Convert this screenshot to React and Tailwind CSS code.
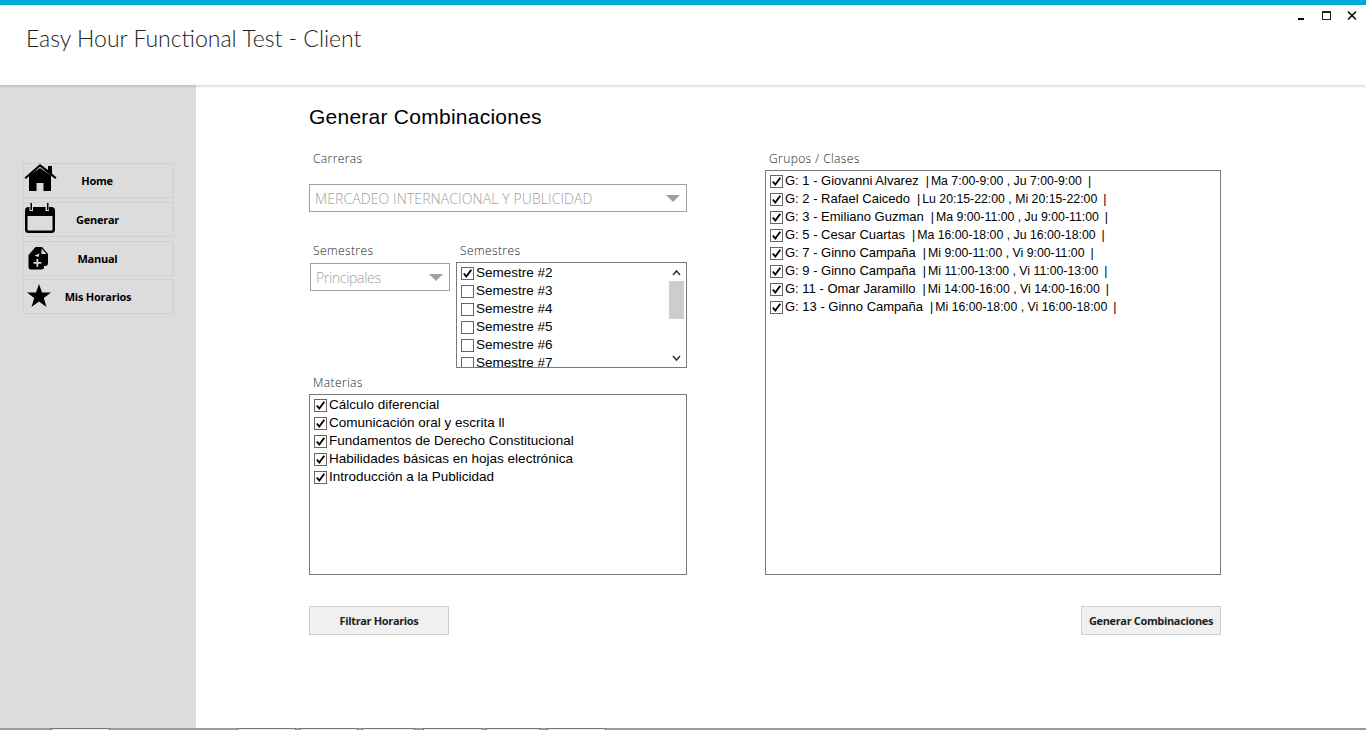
import React from "react";

const seg = { fontFamily: '"Open Sans", "Noto Sans", sans-serif' };
const bold = { fontFamily: '"Open Sans", sans-serif' };
const sans = { fontFamily: '"Liberation Sans", sans-serif' };

function HomeIcon() {
  return (
    <svg width="33" height="29" viewBox="0 0 33 29" fill="black">
      <path d="M16 1L24 7V3h4v7.500l4.500 4-1.300 1.500L16 3.800 1.800 16 .5 14.500z" />
      <path d="M5 12.500L16 5l11 7.500V28h-7.500v-8H12.500v8H5z" />
    </svg>
  );
}

function CalendarIcon() {
  return (
    <svg width="32" height="32" viewBox="0 0 32 32" fill="black">
      <path fillRule="evenodd" d="M4.500 5H5.500V9H9V5H21.500V9H25V5h2.500A3.500 3.500 0 0 1 31 8.500V27.500A3.500 3.500 0 0 1 27.500 31h-23A3.500 3.500 0 0 1 1 27.500V8.500A3.500 3.500 0 0 1 4.500 5zM3.500 14v13.500a1 1 0 0 0 1 1h23a1 1 0 0 0 1-1V14z" />
      <rect x="6.500" y="1" width="1.500" height="7" />
      <rect x="23" y="1" width="1.500" height="7" />
    </svg>
  );
}

function ManualIcon() {
  return (
    <svg width="21" height="24" viewBox="0 0 21 24" fill="black">
      <path fillRule="evenodd" d="M7.500 1h6.500l6 7v9a3 3 0 0 1-3 3h-1v1a2.500 2.500 0 0 1-2.500 2.500H3a2.500 2.500 0 0 1-2.500-2.500V10a2 2 0 0 1 .5-1.500zM13.500 2.500v5.500h5zM8.500 13v3H5.500v1.800h3v3h1.800v-3h3V16h-3v-3z" />
      <path d="M6.500 9.500l5-2-1 3.500z" fill="#dcdcdc" />
    </svg>
  );
}

function StarIcon() {
  return (
    <svg width="24" height="23" viewBox="0 0 24 23" fill="black">
      <polygon points="12,0 15,8.500 24,8.500 16.800,14 19.500,23 12,17.600 4.500,23 7.200,14 0,8.500 9,8.500" />
    </svg>
  );
}

function NavButton({ icon, label, labelClass = "", className = "" }) {
  return (
    <div className={`relative h-[35px] w-[151px] flex items-center border border-[#d0d0d0] text-[11px] font-bold tracking-[-0.25px] text-black ${className}`} style={bold}>
      {icon}
      <span className={`w-full text-center pt-[2px] ${labelClass}`}>{label}</span>
    </div>
  );
}

function Check({ checked }) {
  return (
    <span className="w-[13px] h-[13px] shrink-0 border border-[#666] bg-white flex items-center justify-center mr-[1px]">
      {checked && (
        <svg width="11" height="11" viewBox="0 0 11 11">
          <path d="M1.800 5.500L4.300 8.500L9.300 1.800" fill="none" stroke="black" strokeWidth="1.900" />
        </svg>
      )}
    </span>
  );
}

function Item({ checked = true, children }) {
  return (
    <div className="h-[18px] flex items-center gap-[1px] whitespace-pre text-[13.500px] text-black shrink-0" style={sans}>
      <Check checked={checked} />
      <span>{children}</span>
    </div>
  );
}

function GroupItem({ name, schedule }) {
  return (
    <div className="h-[18px] flex items-center gap-[1px] whitespace-pre text-black shrink-0" style={sans}>
      <Check checked />
      <span className="text-[13px]">{name}</span>
      <span className="text-[12.300px] ml-[6px]">
        |<span className="ml-[2px]">{schedule}</span><span className="ml-[6px]">|</span>
      </span>
    </div>
  );
}

function Label({ children, className = "" }) {
  return (
    <div className={`h-[16px] text-[12px] font-light tracking-[0.4px] text-[#222] leading-[18px] ${className}`} style={seg}>
      {children}
    </div>
  );
}

function Combo({ text, className = "", textClass = "" }) {
  return (
    <div className={`h-[28px] flex items-center justify-between border border-[#a0a0a0] pl-[5px] pr-[6px] text-[14px] font-light text-[#a0a0a0] whitespace-nowrap ${className}`} style={seg}>
      <span className={textClass}>{text}</span>
      <span className="w-0 h-0 border-l-[7px] border-r-[7px] border-t-[7px] border-l-transparent border-r-transparent border-t-[#a0a0a0]" />
    </div>
  );
}

function ActionButton({ children, className = "" }) {
  return (
    <div className={`h-[29px] pt-[1px] flex items-center justify-center bg-[#f0f0f0] border border-[#d0d0d0] text-[11px] font-bold tracking-[-0.35px] text-[#222] ${className}`} style={bold}>
      {children}
    </div>
  );
}

const materias = [
  "Cálculo diferencial",
  "Comunicación oral y escrita ll",
  "Fundamentos de Derecho Constitucional",
  "Habilidades básicas en hojas electrónica",
  "Introducción a la Publicidad",
];

const grupos = [
  ["G: 1 - Giovanni Alvarez", "Ma 7:00-9:00 , Ju 7:00-9:00"],
  ["G: 2 - Rafael Caicedo", "Lu 20:15-22:00 , Mi 20:15-22:00"],
  ["G: 3 - Emiliano Guzman", "Ma 9:00-11:00 , Ju 9:00-11:00"],
  ["G: 5 - Cesar Cuartas", "Ma 16:00-18:00 , Ju 16:00-18:00"],
  ["G: 7 - Ginno Campaña", "Mi 9:00-11:00 , Vi 9:00-11:00"],
  ["G: 9 - Ginno Campaña", "Mi 11:00-13:00 , Vi 11:00-13:00"],
  ["G: 11 - Omar Jaramillo", "Mi 14:00-16:00 , Vi 14:00-16:00"],
  ["G: 13 - Ginno Campaña", "Mi 16:00-18:00 , Vi 16:00-18:00"],
];

const tabs = [
  ["ml-[51px]", "w-[59px]"],
  ["ml-[127px]", "w-[59px]"],
  ["ml-[4px]", "w-[58px]"],
  ["ml-[4px]", "w-[53px]"],
  ["ml-[8px]", "w-[60px]"],
  ["ml-[3px]", "w-[54px]"],
  ["ml-[7px]", "w-[59px]"],
];

export default function App() {
  return (
    <div className="w-[1366px] h-[730px] flex flex-col bg-white overflow-hidden">
      <div className="h-[5px] shrink-0 bg-[#00acd9]" />
      <header className="relative h-[80px] shrink-0 bg-white shadow-[0_1px_3px_rgba(0,0,0,0.2)] z-10 pl-[26px] pt-[15px]">
        <div className="text-[23px] leading-[36px] font-light text-[#222]" style={{ fontFamily: 'Lato, "Open Sans", sans-serif' }}>
          Easy Hour Functional Test - Client
        </div>
        <div className="absolute right-[8px] top-[5px] flex items-start gap-[13px]">
          <svg width="12" height="12" viewBox="0 0 12 12"><rect x="2" y="8" width="6" height="2" fill="black" /></svg>
          <svg width="12" height="12" viewBox="0 0 12 12"><rect x="1.500" y="1.500" width="8" height="8" fill="none" stroke="#222" strokeWidth="1" /><rect x="1" y="1" width="9" height="2" fill="#222" /></svg>
          <svg width="12" height="12" viewBox="0 0 12 12"><path d="M2 1.500L10 9.500M10 1.500L2 9.500" stroke="black" strokeWidth="1.500" /></svg>
        </div>
      </header>

      <div className="flex-1 flex min-h-0">
        <aside className="w-[196px] shrink-0 bg-[#dcdcdc] pl-[23px] pt-[78px] flex flex-col gap-[4px]">
          <NavButton icon={<span className="absolute left-0 -top-[1px]"><HomeIcon /></span>} label="Home" labelClass="pr-[3px]" />
          <NavButton icon={<span className="absolute left-0 -top-[1px]"><CalendarIcon /></span>} label="Generar" labelClass="pr-[2px]" />
          <NavButton icon={<span className="absolute left-[4px] top-[4px]"><ManualIcon /></span>} label="Manual" labelClass="pr-[2px]" />
          <NavButton className="-mt-[1px]" icon={<span className="absolute left-[3px] top-[4px]"><StarIcon /></span>} label="Mis Horarios" labelClass="pr-[1px]" />
        </aside>

        <main className="flex-1 pl-[113px] pt-[18px]">
          <h1 className="text-[21px] leading-[28px] text-black font-normal tracking-[0.25px]" style={sans}>
            Generar Combinaciones
          </h1>

          <div className="mt-[19px] w-[912px] flex justify-between">
            <div className="w-[378px]">
              <Label className="pl-[4px]">Carreras</Label>
              <Combo text="MERCADEO INTERNACIONAL Y PUBLICIDAD" className="mt-[18px]" textClass="tracking-[0.1px]" />

              <div className="mt-[30px] flex">
                <div className="w-[147px] shrink-0">
                  <Label className="pl-[4px]">Semestres</Label>
                  <Combo text="Principales" className="w-[140px] ml-[1px] mt-[5px]" textClass="tracking-[-0.3px]" />
                </div>
                <div className="flex-1">
                  <Label className="pl-[4px]">Semestres</Label>
                  <div className="mt-[4px] h-[106px] border border-[#7a7a7a] flex overflow-hidden">
                    <div className="flex-1 pl-[4px] pt-[1px] overflow-hidden">
                      <Item>Semestre #2</Item>
                      <Item checked={false}>Semestre #3</Item>
                      <Item checked={false}>Semestre #4</Item>
                      <Item checked={false}>Semestre #5</Item>
                      <Item checked={false}>Semestre #6</Item>
                      <Item checked={false}>Semestre #7</Item>
                    </div>
                    <div className="w-[15px] mr-[2px] mt-[1px] flex flex-col items-center">
                      <svg className="h-[17px] shrink-0" width="15" height="17" viewBox="0 0 15 17"><path d="M4 11L7.500 7L11 11" fill="none" stroke="#333" strokeWidth="1.500" /></svg>
                      <div className="w-full h-[38px] bg-[#cdcdcd]" />
                      <div className="flex-1" />
                      <svg className="h-[17px] shrink-0" width="15" height="17" viewBox="0 0 15 17"><path d="M4 6L7.500 10L11 6" fill="none" stroke="#333" strokeWidth="1.500" /></svg>
                    </div>
                  </div>
                </div>
              </div>

              <Label className="pl-[4px] mt-[6px]">Materias</Label>
              <div className="mt-[4px] h-[181px] border border-[#7a7a7a] pl-[4px] pt-[1px] overflow-hidden">
                {materias.map((m) => <Item key={m}>{m}</Item>)}
              </div>

              <ActionButton className="mt-[31px] w-[140px]">Filtrar Horarios</ActionButton>
            </div>

            <div className="w-[456px] flex flex-col">
              <Label className="pl-[4px]">Grupos / Clases</Label>
              <div className="mt-[4px] h-[405px] border border-[#7a7a7a] pl-[4px] pt-[1px] overflow-hidden">
                {grupos.map(([n, s]) => <GroupItem key={n} name={n} schedule={s} />)}
              </div>
              <ActionButton className="mt-[31px] w-[140px] self-end">Generar Combinaciones</ActionButton>
            </div>
          </div>
        </main>
      </div>

      <div className="h-[2px] shrink-0 bg-[#a09894] flex">
        {tabs.map(([ml, w], i) => (
          <div key={i} className={`${ml} ${w} h-[2px] border-t border-x border-[#777] bg-[#e8e8e8]`} />
        ))}
      </div>
    </div>
  );
}
